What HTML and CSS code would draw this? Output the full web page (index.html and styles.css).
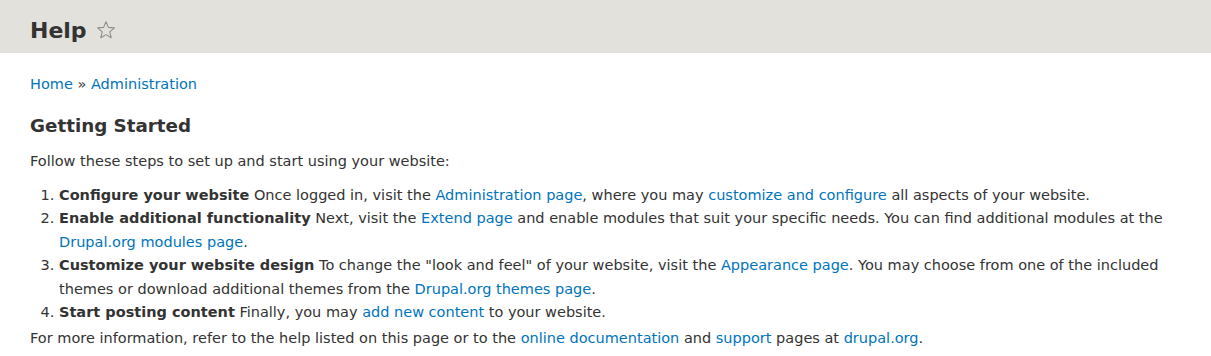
FILE: index.html
```html
<!DOCTYPE html>
<html>
<head>
<meta charset="utf-8">
<link rel="stylesheet" href="styles.css">
</head>
<body>
<header class="page-header">
  <h1 class="page-title">Help <svg class="star" width="20" height="20" viewBox="0 0 20 20"><path d="M10 1.8 L12.4 7.4 L18.4 7.9 L13.8 11.8 L15.2 17.7 L10 14.6 L4.8 17.7 L6.2 11.8 L1.6 7.9 L7.6 7.4 Z" fill="none" stroke="#8f8f8a" stroke-width="1.1" stroke-linejoin="round"/></svg></h1>
</header>
<main class="content">
  <nav class="breadcrumb"><a href="#">Home</a> » <a href="#">Administration</a></nav>
  <h2 class="section-title">Getting Started</h2>
  <p class="intro">Follow these steps to set up and start using your website:</p>
  <ol class="steps">
    <li><strong>Configure your website</strong> Once logged in, visit the <a href="#">Administration page</a>, where you may <a href="#">customize and configure</a> all aspects of your website.</li>
    <li><strong>Enable additional functionality</strong> Next, visit the <a href="#">Extend page</a> and enable modules that suit your specific needs. You can find additional modules at the <a href="#">Drupal.org modules page</a>.</li>
    <li><strong>Customize your website design</strong> To change the "look and feel" of your website, visit the <a href="#">Appearance page</a>. You may choose from one of the included themes or download additional themes from the <a href="#">Drupal.org themes page</a>.</li>
    <li><strong>Start posting content</strong> Finally, you may <a href="#">add new content</a> to your website.</li>
  </ol>
  <p class="outro">For more information, refer to the help listed on this page or to the <a href="#">online documentation</a> and <a href="#">support</a> pages at <a href="#">drupal.org</a>.</p>
</main>
</body>
</html>
```
FILE: styles.css
```css
html, body {
  margin: 0;
  padding: 0;
  background: #fff;
}
body {
  font-family: "DejaVu Sans", Verdana, sans-serif;
  font-size: 14.5px;
  color: #333;
}
a {
  color: #0074bd;
  text-decoration: none;
}
.page-header {
  background: #e2e1dc;
  height: 53px;
  padding: 7px 30px 0;
  box-sizing: border-box;
  display: flex;
  align-items: center;
}
.page-title {
  margin: 0;
  font-size: 22px;
  font-weight: bold;
  color: #333;
  display: flex;
  align-items: center;
  gap: 9px;
}
.star {
  display: block;
}
.content {
  padding: 0 30px;
}
.breadcrumb {
  margin-top: 22px;
  font-size: 14.5px;
  line-height: 18px;
}
.section-title {
  margin: 21px 0 0;
  font-size: 18.3px;
  line-height: 24px;
  font-weight: bold;
}
.intro {
  margin: 13px 0 0;
  line-height: 20px;
}
.steps {
  margin: 13px 0 0;
  padding-left: 29px;
  line-height: 23.4px;
}
.outro {
  margin: 3px 0 0;
  line-height: 23.4px;
}
```
